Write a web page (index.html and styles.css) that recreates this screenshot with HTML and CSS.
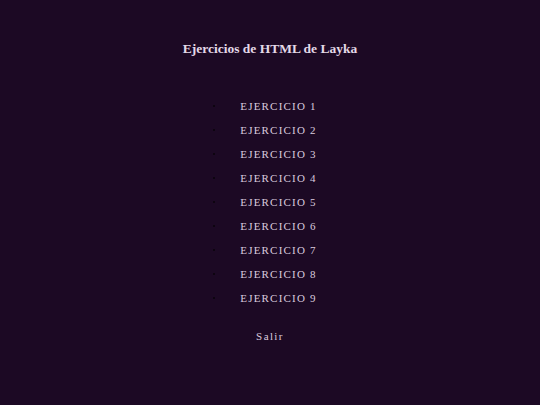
FILE: index.html
```html
<!DOCTYPE html>
<html lang="es">
<head>
<meta charset="utf-8">
<title>Ejercicios de HTML de Layka</title>
<link rel="stylesheet" href="styles.css">
</head>
<body>
<main class="page">
  <h1 class="title">Ejercicios de HTML de Layka</h1>
  <ul class="menu">
    <li class="item"><a class="link" href="#">EJERCICIO 1</a></li>
    <li class="item"><a class="link" href="#">EJERCICIO 2</a></li>
    <li class="item"><a class="link" href="#">EJERCICIO 3</a></li>
    <li class="item"><a class="link" href="#">EJERCICIO 4</a></li>
    <li class="item"><a class="link" href="#">EJERCICIO 5</a></li>
    <li class="item"><a class="link" href="#">EJERCICIO 6</a></li>
    <li class="item"><a class="link" href="#">EJERCICIO 7</a></li>
    <li class="item"><a class="link" href="#">EJERCICIO 8</a></li>
    <li class="item"><a class="link" href="#">EJERCICIO 9</a></li>
  </ul>
  <a class="exit" href="#">Salir</a>
</main>
</body>
</html>
```
FILE: styles.css
```css
html, body {
  margin: 0;
  height: 100%;
  background: #1c0924;
}
.page {
  display: flex;
  flex-direction: column;
  align-items: center;
  padding-top: 41px;
  font-family: "Liberation Serif", "Times New Roman", serif;
}
.title {
  margin: 0;
  font-size: 13.5px;
  font-weight: bold;
  line-height: 16px;
  color: #e4d9e8;
}
.menu {
  list-style: none;
  margin: 37px 0 0 0;
  padding: 0 10px 0 0;
  display: flex;
  flex-direction: column;
}
.item {
  display: flex;
  align-items: center;
  height: 24px;
}
.item::before {
  content: "";
  width: 2px;
  height: 2px;
  border-radius: 50%;
  background: #08030a;
  margin-right: 25px;
}
.link {
  color: #dacbdf;
  text-decoration: none;
  font-size: 11px;
  letter-spacing: 1.2px;
}
.exit {
  margin-top: 20px;
  color: #dacbdf;
  text-decoration: none;
  font-size: 11px;
  letter-spacing: 1.4px;
}
```
